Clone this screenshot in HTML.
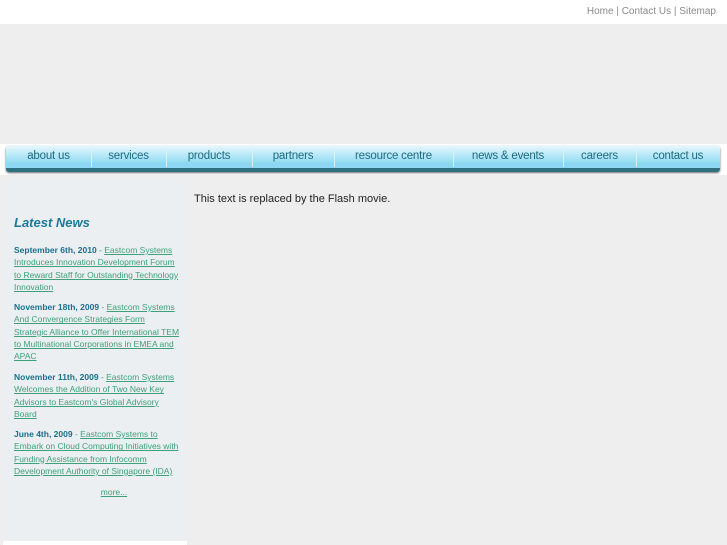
<!DOCTYPE html>
<html><head><style>
*{margin:0;padding:0;box-sizing:border-box}
body{width:727px;height:545px;background:#eeeeee;font-family:"Liberation Sans",sans-serif;position:relative;overflow:hidden}
#top{position:absolute;left:0;top:0;width:727px;height:24px;background:#fff}
#links{position:absolute;right:11px;top:6px;font-size:10px;color:#8a8a8a}
#navwrap{position:absolute;left:0;top:144px;width:727px;height:31px;background:#fff}
#nav{position:absolute;left:6px;top:146px;width:714px;height:26px;border-radius:3px;background:linear-gradient(#e6f7fd,#a9e3f6 55%,#8dd7f2 80%);border-bottom:4px solid #2e6f80;box-shadow:0 1px 2px #666}
#nav span{position:absolute;top:4px;font-size:11.5px;color:#1c6a80;text-align:center;letter-spacing:-0.2px}
#nav i{position:absolute;top:1px;height:20px;width:1px;background:#d8f2fb}
#side{position:absolute;left:3px;top:178px;width:184px;height:363px;background:#ebeff1}
#bot{position:absolute;left:3px;top:541px;width:184px;height:4px;background:#fff}
h2{position:absolute;left:14px;top:215px;font-size:13px;font-style:italic;color:#1a7a9a}
.n{position:absolute;left:14px;width:166px;font-size:8.5px;line-height:12.3px;color:#3fa07a}
.n b{color:#1a6f8e}
.n a{color:#3fa07a;text-decoration:underline}
#flash{position:absolute;left:194px;top:193px;font-size:11px;color:#222}
</style></head><body>
<div id="top"></div>
<div id="links">Home | Contact Us | Sitemap</div>
<div id="navwrap"></div>
<div id="nav">
<span style="left:0;width:85px">about us</span><i style="left:85px"></i>
<span style="left:85px;width:75px">services</span><i style="left:160px"></i>
<span style="left:160px;width:86px">products</span><i style="left:246px"></i>
<span style="left:246px;width:82px">partners</span><i style="left:328px"></i>
<span style="left:328px;width:119px">resource centre</span><i style="left:447px"></i>
<span style="left:447px;width:110px">news &amp; events</span><i style="left:557px"></i>
<span style="left:557px;width:73px">careers</span><i style="left:630px"></i>
<span style="left:630px;width:84px">contact us</span>
</div>
<div id="side"></div>
<div id="bot"></div>
<h2>Latest News</h2>
<div class="n" style="top:244px"><b>September 6th, 2010</b> - <a>Eastcom Systems Introduces Innovation Development Forum to Reward Staff for Outstanding Technology Innovation</a></div>
<div class="n" style="top:301px"><b>November 18th, 2009</b> - <a>Eastcom Systems And Convergence Strategies Form<br>Strategic Alliance to Offer International TEM to Multinational Corporations in EMEA and APAC</a></div>
<div class="n" style="top:371px"><b>November 11th, 2009</b> - <a>Eastcom Systems Welcomes the Addition of Two New Key Advisors to Eastcom's Global Advisory Board</a></div>
<div class="n" style="top:428px"><b>June 4th, 2009</b> - <a>Eastcom Systems to Embark on Cloud Computing Initiatives with Funding Assistance from Infocomm Development Authority of Singapore (IDA)</a></div>
<div class="n" style="top:486px;text-align:center;width:200px"><a>more...</a></div>
<div id="flash">This text is replaced by the Flash movie.</div>
</body></html>
